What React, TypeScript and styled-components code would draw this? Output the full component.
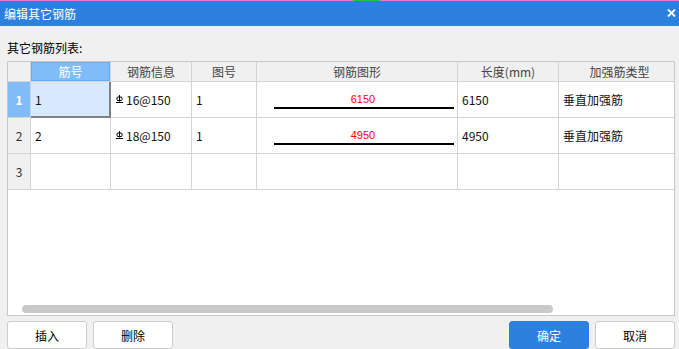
import React from 'react';
import styled, { createGlobalStyle } from 'styled-components';

const GlobalStyle = createGlobalStyle`
  body {
    margin: 0;
    background: #f0f0f0;
    font-family: "Noto Sans CJK SC", "Liberation Sans", sans-serif;
  }
`;

const Window = styled.div`
  width: 679px;
  height: 349px;
  overflow: hidden;
  background: #f0f0f0;
  display: flex;
  flex-direction: column;
`;

const TopStrip = styled.div`
  height: 1px;
  background: linear-gradient(90deg, #e77ccb 0 52%, #22c34a 52% 56%, #e77ccb 56% 100%);
`;

const TitleBar = styled.div`
  height: 26px;
  background: #2e80e0;
  color: #fff;
  font-size: 12px;
  display: flex;
  align-items: center;
  justify-content: space-between;
  padding: 0 2px 0 4px;
`;

const CloseButton = styled.span`
  display: flex;
  width: 12px;
  height: 12px;
  align-items: center;
  justify-content: center;
`;

const Body = styled.div`
  flex: 1;
  display: flex;
  flex-direction: column;
  padding: 13px 4px 0 7px;
`;

const Label = styled.div`
  height: 18px;
  line-height: 18px;
  font-size: 12px;
  color: #000;
  margin-bottom: 4px;
`;

const Grid = styled.div`
  height: 255px;
  box-sizing: border-box;
  border: 1px solid #c8c8c8;
  background: #fff;
  overflow: hidden;
  display: flex;
  flex-direction: column;
`;

const Rows = styled.div`
  display: grid;
  grid-template-columns: 23px 80px 81px 65px 201px 101px 122px;
  grid-template-rows: 20px 36px 36px 36px;
`;

const HeadCell = styled.div<{ $active?: boolean }>`
  box-sizing: border-box;
  border-right: 1px solid #d3d3d3;
  border-bottom: 1px solid #d3d3d3;
  background: ${p => (p.$active ? '#80bdf8' : '#f0f0f0')};
  color: ${p => (p.$active ? '#fff' : '#444')};
  box-shadow: ${p => (p.$active ? 'inset 0 0 0 1px #68adf1' : 'none')};
  font-size: 12px;
  display: flex;
  align-items: center;
  justify-content: center;
  white-space: nowrap;
`;

const RowHead = styled.div<{ $active?: boolean }>`
  box-sizing: border-box;
  border-right: 1px solid #d3d3d3;
  border-bottom: 1px solid #d3d3d3;
  background: ${p => (p.$active ? '#80bdf8' : '#f0f0f0')};
  color: ${p => (p.$active ? '#fff' : '#333')};
  font-weight: ${p => (p.$active ? 700 : 400)};
  font-size: 12px;
  display: flex;
  align-items: center;
  justify-content: center;
`;

const Cell = styled.div<{ $selected?: boolean; $pad?: number }>`
  box-sizing: border-box;
  border-right: 1px solid ${p => (p.$selected ? '#808080' : '#d3d3d3')};
  border-bottom: 1px solid ${p => (p.$selected ? '#808080' : '#d3d3d3')};
  background: ${p => (p.$selected ? '#d6e9fe' : '#fff')};
  box-shadow: ${p => (p.$selected ? 'inset -1px -1px 0 #808080' : 'none')};
  font-size: 12px;
  color: #111;
  padding-left: ${p => p.$pad ?? 4}px;
  display: flex;
  align-items: center;
  white-space: nowrap;
  overflow: hidden;
`;

const FigureCell = styled.div`
  box-sizing: border-box;
  border-right: 1px solid #d3d3d3;
  border-bottom: 1px solid #d3d3d3;
  padding: 12px 3px 0 17px;
  display: flex;
  flex-direction: column;
  align-items: stretch;
`;

const FigureText = styled.span`
  font-family: "Liberation Sans", sans-serif;
  font-size: 11px;
  line-height: 11px;
  color: #ff0000;
  text-align: center;
  padding-right: 2px;
`;

const FigureBar = styled.div`
  height: 2px;
  background: #000;
  margin-top: 2px;
`;

const BarMark = styled.svg`
  width: 7px;
  height: 8px;
  flex: none;
  margin: 0 3px 2px 0;
`;

const Spacer = styled.div`
  flex: 1;
`;

const ScrollThumb = styled.div`
  width: 531px;
  height: 8px;
  border-radius: 4px;
  background: #c9c9c9;
  margin: 0 0 2px 14px;
`;

const Footer = styled.div`
  margin-top: 5px;
  display: flex;
  justify-content: space-between;
`;

const ButtonGroup = styled.div`
  display: flex;
  gap: 6px;
`;

const Button = styled.button<{ $primary?: boolean }>`
  width: 80px;
  height: 28px;
  box-sizing: border-box;
  border: 1px solid ${p => (p.$primary ? '#2e80e0' : '#cdcdcd')};
  border-radius: 3px;
  background: ${p => (p.$primary ? '#2e80e0' : '#fff')};
  color: ${p => (p.$primary ? '#fff' : '#000')};
  font-family: inherit;
  font-size: 12px;
  padding: 0;
  cursor: pointer;
`;

// 三级钢符号
const SteelMark: React.FC = () => (
  <BarMark viewBox="0 0 7 8">
    <rect x="1" y="2" width="5" height="3.5" rx="1" fill="none" stroke="#000" strokeWidth="1" />
    <line x1="3.5" y1="0" x2="3.5" y2="6.5" stroke="#000" strokeWidth="1" />
    <line x1="0" y1="7.5" x2="7" y2="7.5" stroke="#000" strokeWidth="1" />
  </BarMark>
);

const headers = ['筋号', '钢筋信息', '图号', '钢筋图形', '长度(mm)', '加强筋类型'];

const rows = [
  { no: '1', dia: '16@150', fig: '1', len: '6150', type: '垂直加强筋' },
  { no: '2', dia: '18@150', fig: '1', len: '4950', type: '垂直加强筋' },
];

export default function App() {
  return (
    <Window>
      <GlobalStyle />
      <TopStrip />
      <TitleBar>
        <span>编辑其它钢筋</span>
        <CloseButton>
          <svg width="9" height="8" viewBox="0 0 9 8">
            <path d="M1 0.5 L8 7.5 M8 0.5 L1 7.5" stroke="#fff" strokeWidth="1.8" />
          </svg>
        </CloseButton>
      </TitleBar>
      <Body>
        <Label>其它钢筋列表:</Label>
        <Grid>
          <Rows>
            <HeadCell />
            {headers.map((h, i) => (
              <HeadCell key={h} $active={i === 0}>
                {h}
              </HeadCell>
            ))}
            {rows.map((r, i) => (
              <React.Fragment key={r.no}>
                <RowHead $active={i === 0}>{r.no}</RowHead>
                <Cell $selected={i === 0}>{r.no}</Cell>
                <Cell $pad={5}>
                  <SteelMark />
                  {r.dia}
                </Cell>
                <Cell>{r.fig}</Cell>
                <FigureCell>
                  <FigureText>{r.len}</FigureText>
                  <FigureBar />
                </FigureCell>
                <Cell>{r.len}</Cell>
                <Cell>{r.type}</Cell>
              </React.Fragment>
            ))}
            <RowHead>3</RowHead>
            <Cell />
            <Cell />
            <Cell />
            <Cell />
            <Cell />
            <Cell />
          </Rows>
          <Spacer />
          <ScrollThumb />
        </Grid>
        <Footer>
          <ButtonGroup>
            <Button>插入</Button>
            <Button>删除</Button>
          </ButtonGroup>
          <ButtonGroup>
            <Button $primary>确定</Button>
            <Button>取消</Button>
          </ButtonGroup>
        </Footer>
      </Body>
    </Window>
  );
}
